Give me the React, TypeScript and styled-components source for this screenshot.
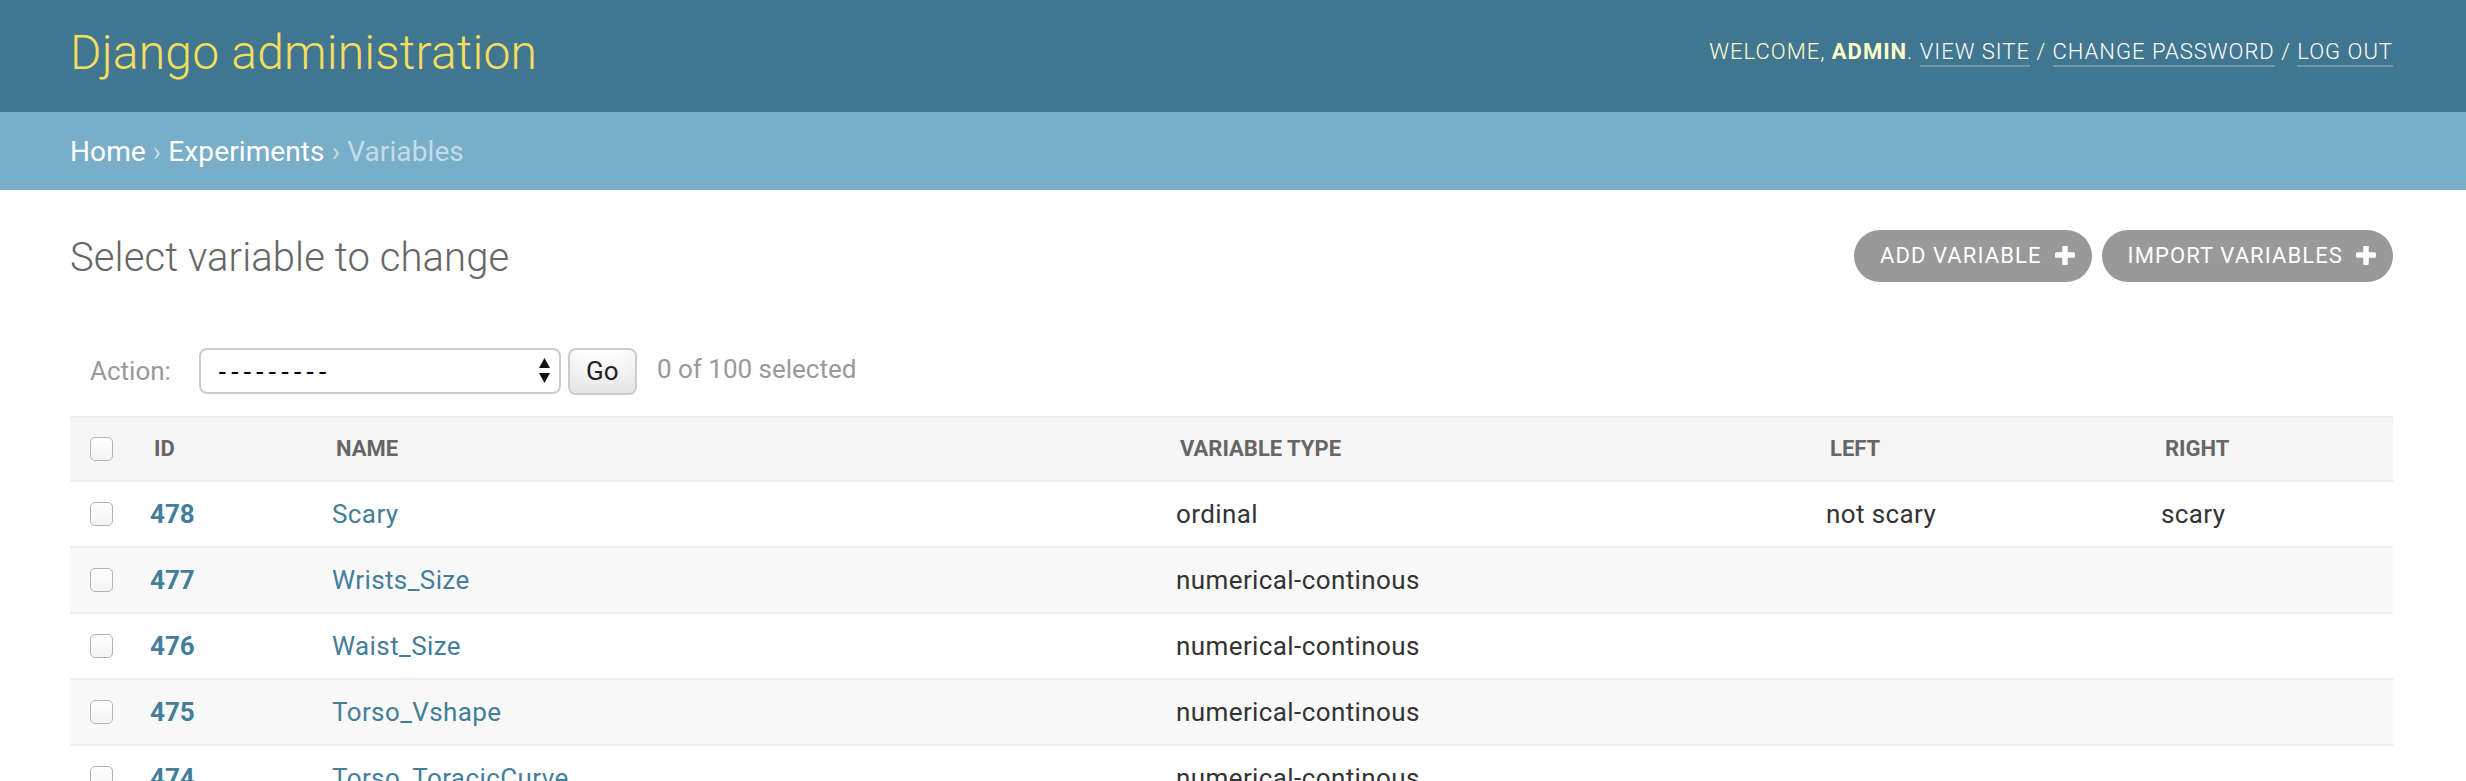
import React from "react";
import styled, { createGlobalStyle } from "styled-components";

const GlobalStyle = createGlobalStyle`
  html, body { margin: 0; padding: 0; background: #fff; }
  body {
    font-family: Roboto, "Liberation Sans", Arial, sans-serif;
    color: #333;
    font-size: 28px;
  }
  * { box-sizing: border-box; }
`;

const Header = styled.header`
  display: flex;
  justify-content: space-between;
  align-items: flex-start;
  height: 112px;
  padding: 0 73px 0 70px;
  background: #417690;
  color: #ffc;
  overflow: hidden;
`;

const Branding = styled.h1`
  margin: 25px 0 0;
  font-size: 48px;
  line-height: 56px;
  font-weight: 300;
  letter-spacing: 0.2px;
  color: #f5dd5d;
`;

const UserTools = styled.div`
  margin-top: 36px;
  font-size: 22px;
  line-height: 32px;
  font-weight: 300;
  letter-spacing: 1px;
  text-transform: uppercase;
  color: #ffc;
  white-space: nowrap;
  strong { font-weight: 700; }
`;

const ToolLink = styled.a`
  color: #fff;
  text-decoration: none;
  border-bottom: 2px solid rgba(255, 255, 255, 0.25);
  padding-bottom: 1px;
`;

const Breadcrumbs = styled.nav`
  background: #79aec8;
  padding: 23px 70px 21px;
  font-size: 28px;
  line-height: 34px;
  letter-spacing: 0.1px;
  color: #c4dce8;
`;

const Crumb = styled.a`
  color: #fff;
  text-decoration: none;
`;

const Content = styled.main`
  padding: 40px 73px 0 70px;
`;

const TitleRow = styled.div`
  display: flex;
  justify-content: space-between;
  align-items: flex-start;
`;

const PageTitle = styled.h1`
  margin: 4px 0 0;
  font-size: 40px;
  line-height: 48px;
  font-weight: 300;
  letter-spacing: 0.1px;
  color: #666;
`;

const ObjectTools = styled.ul`
  display: flex;
  gap: 10px;
  margin: 0;
  padding: 0;
  list-style: none;
`;

const ToolButton = styled.a`
  display: inline-flex;
  align-items: center;
  gap: 13px;
  height: 52px;
  padding: 0 17px 0 26px;
  border-radius: 26px;
  background: #999;
  color: #fff;
  font-size: 22px;
  line-height: 52px;
  font-weight: 400;
  letter-spacing: 1.1px;
  text-transform: uppercase;
  text-decoration: none;
  white-space: nowrap;
`;

const Actions = styled.div`
  display: flex;
  align-items: center;
  height: 48px;
  margin-top: 65px;
  padding: 0 20px;
  font-size: 26px;
  color: #999;
`;

const ActionLabel = styled.label`
  font-size: 26px;
  color: #999;
`;

const SelectWrap = styled.div`
  position: relative;
  margin-left: 28px;
  width: 362px;
  height: 46px;
`;

const ActionSelect = styled.select`
  appearance: none;
  -webkit-appearance: none;
  width: 100%;
  height: 100%;
  margin: 0;
  padding: 0 40px 0 17px;
  border: 2px solid #ccc;
  border-radius: 8px;
  background: #fff;
  color: #000;
  font-family: "Liberation Sans", Arial, sans-serif;
  font-size: 26px;
  letter-spacing: 3.9px;
`;

const SelectArrows = styled.svg`
  position: absolute;
  right: 11px;
  top: 10px;
  pointer-events: none;
`;

const GoButton = styled.button`
  margin: 0 0 0 7px;
  width: 69px;
  height: 47px;
  padding: 0;
  border: 2px solid #ccc;
  border-radius: 8px;
  background: #fff;
  box-shadow: 0 -30px 40px -20px rgba(0, 0, 0, 0.15) inset;
  color: #222;
  font-family: Roboto, "Liberation Sans", Arial, sans-serif;
  font-size: 26px;
  line-height: 1;
`;

const Counter = styled.span`
  margin: 0 0 5px 20px;
  font-size: 26px;
  color: #999;
`;

const Table = styled.table`
  width: 2323px;
  margin-top: 21px;
  border-collapse: collapse;
  table-layout: fixed;
`;

const HeadCell = styled.th<{ $check?: boolean }>`
  padding: ${(p) => (p.$check ? "15px 0 15px 20px" : "15px 20px")};
  border-top: 2px solid #eee;
  border-bottom: 2px solid #eee;
  background: #f6f6f6;
  color: #666;
  font-size: 22px;
  line-height: 32px;
  font-weight: 700;
  text-align: left;
  text-transform: uppercase;
  vertical-align: middle;
  white-space: nowrap;
`;

const Row = styled.tr<{ $alt: boolean }>`
  background: ${(p) => (p.$alt ? "#f9f9f9" : "#fff")};
`;

const Cell = styled.td<{ $check?: boolean }>`
  padding: ${(p) => (p.$check ? "16px 0 16px 20px" : "16px")};
  border-bottom: 2px solid #eee;
  font-size: 26px;
  line-height: 32px;
  letter-spacing: 0.4px;
  color: #333;
  vertical-align: ${(p) => (p.$check ? "middle" : "top")};
  white-space: nowrap;
`;

const IdLink = styled.a`
  color: #447e9b;
  font-weight: 700;
  letter-spacing: 0;
  text-decoration: none;
`;

const NameLink = styled.a`
  color: #447e9b;
  text-decoration: none;
`;

const Check = styled.input`
  appearance: none;
  -webkit-appearance: none;
  display: block;
  width: 23px;
  height: 24px;
  margin: 0;
  border: 1.5px solid #b3b3b3;
  border-radius: 5px;
  background: linear-gradient(#fff, #f4f4f4);
`;

const PlusIcon = () => (
  <svg width="20" height="20" viewBox="192 192 1408 1408" fill="#fff" aria-hidden="true">
    <path d="M1600 736v192q0 40-28 68t-68 28h-416v416q0 40-28 68t-68 28h-192q-40 0-68-28t-28-68v-416h-416q-40 0-68-28t-28-68v-192q0-40 28-68t68-28h416v-416q0-40 28-68t68-28h192q40 0 68 28t28 68v416h416q40 0 68 28t28 68z" />
  </svg>
);

type Variable = { id: number; name: string; type: string; left: string; right: string };

const rows: Variable[] = [
  { id: 478, name: "Scary", type: "ordinal", left: "not scary", right: "scary" },
  { id: 477, name: "Wrists_Size", type: "numerical-continous", left: "", right: "" },
  { id: 476, name: "Waist_Size", type: "numerical-continous", left: "", right: "" },
  { id: 475, name: "Torso_Vshape", type: "numerical-continous", left: "", right: "" },
  { id: 474, name: "Torso_ToracicCurve", type: "numerical-continous", left: "", right: "" },
];

export default function App() {
  return (
    <>
      <GlobalStyle />
      <Header>
        <Branding>Django administration</Branding>
        <UserTools>
          Welcome, <strong>admin</strong>. <ToolLink href="#">View site</ToolLink> /{" "}
          <ToolLink href="#">Change password</ToolLink> / <ToolLink href="#">Log out</ToolLink>
        </UserTools>
      </Header>
      <Breadcrumbs>
        <Crumb href="#">Home</Crumb> › <Crumb href="#">Experiments</Crumb> › Variables
      </Breadcrumbs>
      <Content>
        <TitleRow>
          <PageTitle>Select variable to change</PageTitle>
          <ObjectTools>
            <li>
              <ToolButton href="#">
                Add variable <PlusIcon />
              </ToolButton>
            </li>
            <li>
              <ToolButton href="#">
                Import variables <PlusIcon />
              </ToolButton>
            </li>
          </ObjectTools>
        </TitleRow>
        <Actions>
          <ActionLabel>Action:</ActionLabel>
          <SelectWrap>
            <ActionSelect defaultValue="">
              <option value="">---------</option>
              <option value="delete">Delete selected variables</option>
            </ActionSelect>
            <SelectArrows width="11" height="26" viewBox="0 0 11 26">
              <path d="M5.5 0 L11 10 L0 10 Z" fill="#111" />
              <path d="M0 15 L11 15 L5.5 25 Z" fill="#111" />
            </SelectArrows>
          </SelectWrap>
          <GoButton type="button">Go</GoButton>
          <Counter>0 of 100 selected</Counter>
        </Actions>
        <Table>
          <colgroup>
            <col style={{ width: 64 }} />
            <col style={{ width: 182 }} />
            <col style={{ width: 844 }} />
            <col style={{ width: 650 }} />
            <col style={{ width: 335 }} />
            <col style={{ width: 248 }} />
          </colgroup>
          <thead>
            <tr>
              <HeadCell $check>
                <Check type="checkbox" />
              </HeadCell>
              <HeadCell>ID</HeadCell>
              <HeadCell>Name</HeadCell>
              <HeadCell>Variable type</HeadCell>
              <HeadCell>Left</HeadCell>
              <HeadCell>Right</HeadCell>
            </tr>
          </thead>
          <tbody>
            {rows.map((r, i) => (
              <Row key={r.id} $alt={i % 2 === 1}>
                <Cell $check>
                  <Check type="checkbox" />
                </Cell>
                <Cell>
                  <IdLink href="#">{r.id}</IdLink>
                </Cell>
                <Cell>
                  <NameLink href="#">{r.name}</NameLink>
                </Cell>
                <Cell>{r.type}</Cell>
                <Cell>{r.left}</Cell>
                <Cell>{r.right}</Cell>
              </Row>
            ))}
          </tbody>
        </Table>
      </Content>
    </>
  );
}
